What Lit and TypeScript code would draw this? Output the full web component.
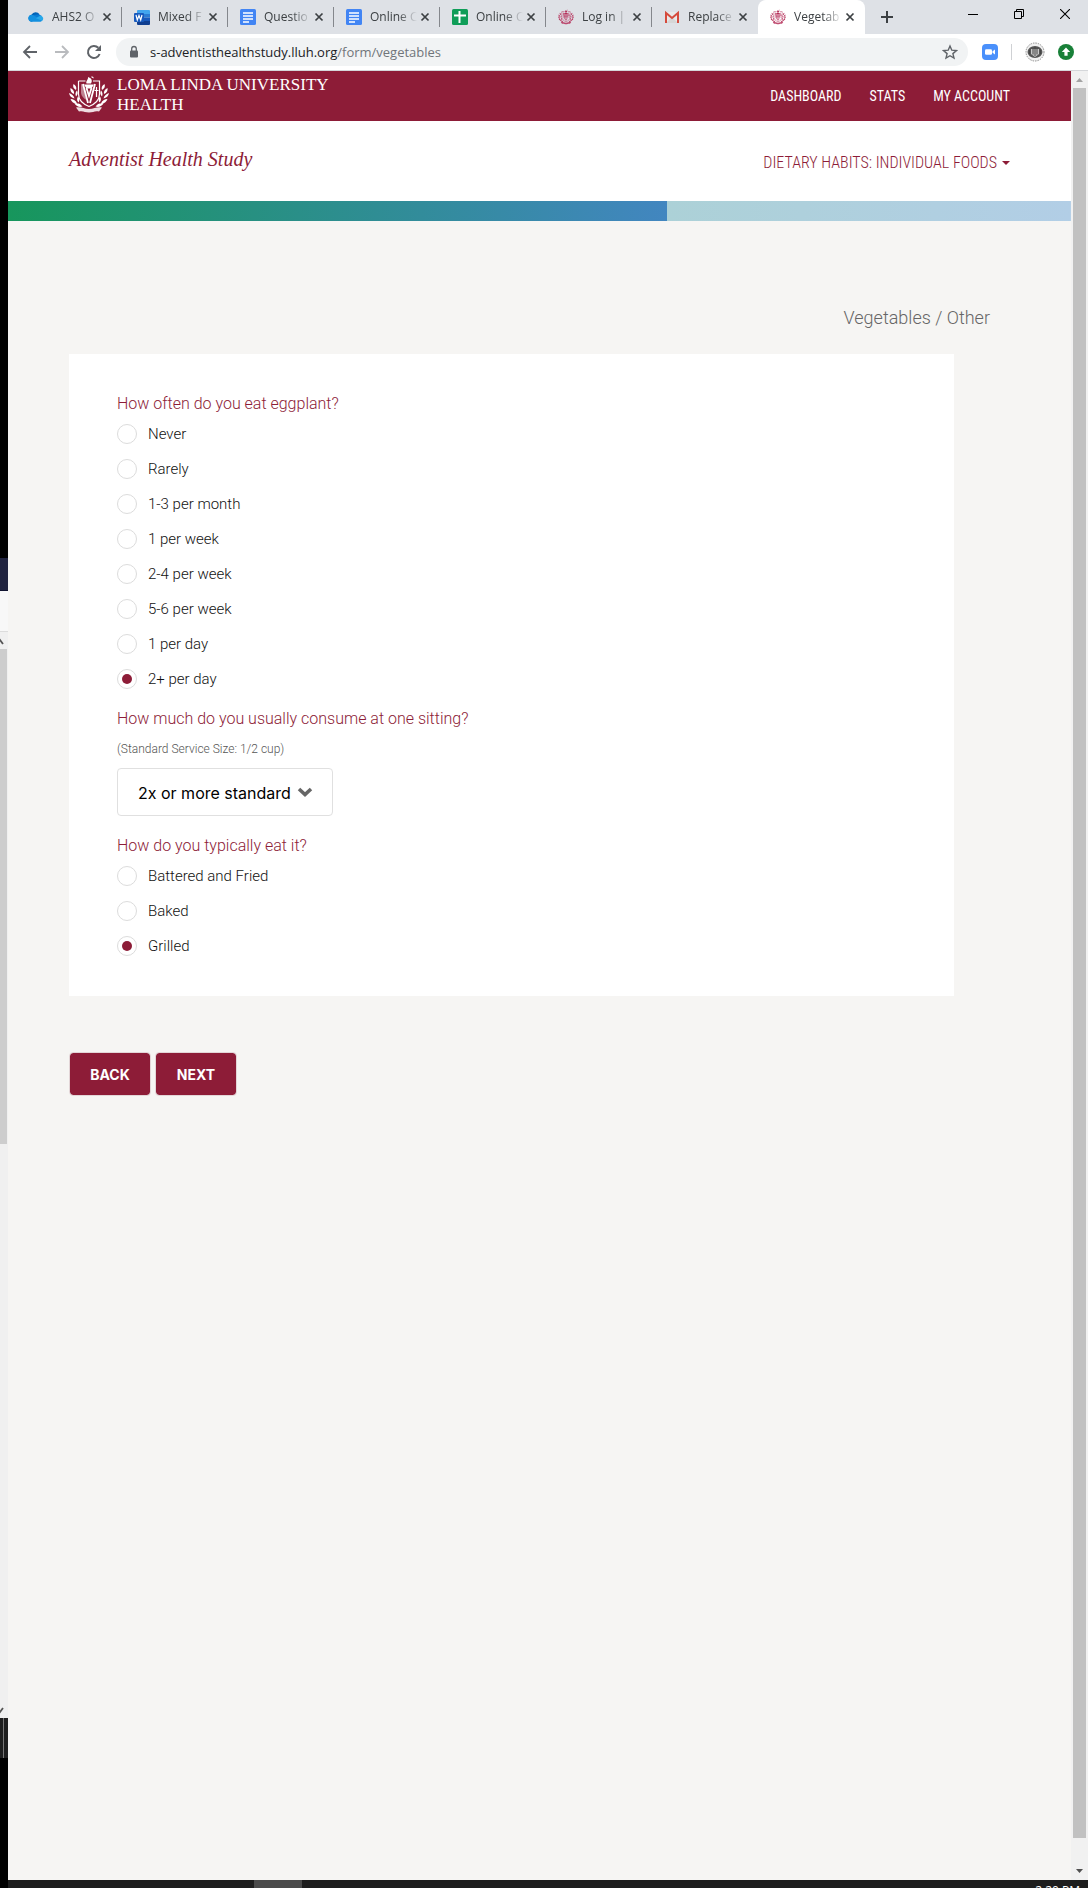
import { LitElement, html, css, svg } from "lit";
import { customElement, property, state } from "lit/decorators.js";
import { classMap } from "lit/directives/class-map.js";

type IconName =
  | "cloud" | "word" | "docs" | "sheets" | "seal" | "gmail"
  | "back" | "forward" | "reload" | "lock" | "star" | "zoom" | "avatar" | "update"
  | "close" | "plus" | "minimize" | "restore" | "exit";

const sealShape = svg`
  <path d="M9.500 5h7M24 5h6.500v13c0 6-4.500 10-10.500 12.500C14 28 9.500 24 9.500 18V5" fill="none" stroke="currentColor" stroke-width="1.200"/>
  <path d="M12 8c1.500 0 2.500 1 3 3l2.500 13c-3-1.500-5-4-5.500-7z" fill="currentColor" opacity=".45"/>
  <path d="M14 8l5 19M26 8l-5 19M17.500 12l2.500 8 2.500-8" fill="none" stroke="currentColor" stroke-width="1.800"/>
  <path d="M27.500 11v10M25.500 14.500h4" stroke="currentColor" stroke-width="1.200"/>
  <path d="M15 8.500h10l-2.500 4h-5z" fill="currentColor"/>
  <path d="M17.500 7.500c-1-3 2-3.500 1.500-6.500 3 1 5 3 3 6.500zM22 1c1.500-1 3 0 2.500 1.500" fill="currentColor"/>
  <g fill="currentColor">
    <path d="M4.500 8c2.500 1.500 3.500 3.500 2.500 6-2.500-1.500-3.500-3.500-2.500-6zM1.500 12c3 1.500 4 3.500 3.500 6-3-1-4-3.500-3.500-6zM0 17c3 1 5 3 5.500 5.500C2.500 22 .5 20 0 17zM1.500 23c3 0 5.500 1.500 6.500 4.500-3 .5-5.500-1.500-6.500-4.500zM5.500 27.500c3-1 6 0 8 3-3 1-6 0-8-3zM8 14.500c1 2 1 4-1 6-1-2.500-.5-4.500 1-6zM9 20.500c1.800 2 1.800 4 .5 6-1.800-2-1.800-4-.5-6z"/>
    <path d="M35.500 8c-2.500 1.500-3.500 3.500-2.500 6 2.500-1.500 3.500-3.500 2.500-6zM38.500 12c-3 1.500-4 3.500-3.500 6 3-1 4-3.500 3.500-6zM40 17c-3 1-5 3-5.500 5.500 3-.5 5-2.500 5.500-5.500zM38.500 23c-3 0-5.500 1.500-6.500 4.500 3 .5 5.500-1.500 6.500-4.500zM34.500 27.500c-3-1-6 0-8 3 3 1 6 0 8-3zM32 14.500c-1 2-1 4 1 6 1-2.500.5-4.500-1-6zM31 20.500c-1.800 2-1.800 4-.5 6 1.800-2 1.800-4 .5-6z"/>
  </g>
  <path d="M7 31.500c5-1 8 1.500 13 1.500s8-2.500 13-1.500l-3 4c-4-1-6 1-10 1s-6-2-10-1z" fill="currentColor" opacity=".85"/>`;

const drawings: Record<IconName, [string, unknown]> = {
  cloud: ["0 0 16 16", svg`<path d="M4 12.800a3.600 3.600 0 0 1-.5-7.100 4.600 4.600 0 0 1 8-.4L9 8z" fill="#0364b8"/><path d="M9.500 5.600a3.800 3.800 0 0 1 3.400.8 3 3 0 0 1 1 .5L8 11 3 6.200z" fill="#0a7bd4"/><path d="M3.500 12.800a3.500 3.500 0 1 1 1.800-6.600l9 5.400a3 3 0 0 1-1.800 1.200z" fill="#1490df"/><path d="M7.800 9.300l4.700-2.800a3.200 3.200 0 0 1 1.900 5.200z" fill="#28a8ea"/>`],
  word: ["0 0 16 16", svg`<path d="M4 1h11a1 1 0 0 1 1 1v3H3V2a1 1 0 0 1 1-1z" fill="#41a5ee"/><path d="M3 5h13v3.500H3z" fill="#2b7cd3"/><path d="M3 8.500h13V12H3z" fill="#185abd"/><path d="M3 12h13v3a1 1 0 0 1-1 1H4a1 1 0 0 1-1-1z" fill="#103f91"/><rect y="4" width="10" height="9" rx="1" fill="#185abd"/><path d="M2 6l1.300 5L5 6.500 6.700 11 8 6" fill="none" stroke="#fff" stroke-width="1.200"/>`],
  docs: ["0 0 16 16", svg`<rect width="16" height="16" rx="1.500" fill="#4285f4"/><path d="M3 4h10M3 7h10M3 10h10M3 13h6" stroke="#fff" stroke-width="1.600"/>`],
  sheets: ["0 0 16 16", svg`<rect width="16" height="16" rx="1.500" fill="#0f9d58"/><path d="M2 6.500h12M7.500 2v12" stroke="#fff" stroke-width="2"/>`],
  seal: ["0 0 40 37", sealShape],
  gmail: ["0 0 16 16", svg`<path d="M2 3h12v11H2z" fill="#e9e9e9"/><path d="M2 14l6-6 6 6z" fill="#d6d6d6"/><path d="M2 14V4l6 5 6-5v10" fill="none" stroke="#d54b3d" stroke-width="2"/>`],
  back: ["0 0 16 16", svg`<path d="M15 8H2M8 2L2 8l6 6" fill="none" stroke="#5f6368" stroke-width="1.800"/>`],
  forward: ["0 0 16 16", svg`<path d="M1 8h13M8 2l6 6-6 6" fill="none" stroke="#b9bbbe" stroke-width="1.800"/>`],
  reload: ["0 0 16 16", svg`<path d="M13.600 10A6 6 0 1 1 12.300 3.800" fill="none" stroke="#5f6368" stroke-width="2"/><path d="M15 1v6H9z" fill="#5f6368"/>`],
  lock: ["0 0 16 16", svg`<rect x="4" y="6.500" width="8" height="7" rx="1" fill="#5f6368"/><path d="M5.700 7V4.800a2.300 2.300 0 0 1 4.600 0V7" fill="none" stroke="#5f6368" stroke-width="1.300"/>`],
  star: ["0 0 16 16", svg`<path d="M8 2l1.800 4.200 4.600.4-3.500 3 1.100 4.500L8 11.700l-4 2.400 1.100-4.500-3.500-3 4.600-.4z" fill="none" stroke="#5f6368" stroke-width="1.400"/>`],
  zoom: ["0 0 16 16", svg`<rect width="16" height="16" rx="4" fill="#4a90fb"/><rect x="3" y="5.200" width="7" height="5.600" rx="1.300" fill="#fff"/><path d="M10.500 7.300L13 5.500v5l-2.500-1.800z" fill="#fff"/>`],
  avatar: ["0 0 20 20", svg`<circle cx="10" cy="10" r="9" fill="#f1f1f1" stroke="#8b8b8b" stroke-width="1" stroke-dasharray="1.500 1"/><ellipse cx="10" cy="10" rx="7.500" ry="6" fill="#555"/><path d="M6 7h8v5l-4 3-4-3z" fill="#c9c9c9"/><path d="M8 6.500v6M10 5v9M12 6.500v6M4.500 8v4M15.500 8v4" stroke="#444" stroke-width="1"/>`],
  update: ["0 0 16 16", svg`<circle cx="8" cy="8" r="8" fill="#188038"/><path d="M8 3.500L12.200 8H9.600v3.800H6.400V8H3.800z" fill="#fff"/>`],
  close: ["0 0 10 10", svg`<path d="M1.500 1.500l7 7M8.500 1.500l-7 7" stroke="#3c4043" stroke-width="1.700"/>`],
  plus: ["0 0 12 12", svg`<path d="M6 0v12M0 6h12" stroke="#3c4043" stroke-width="2"/>`],
  minimize: ["0 0 10 10", svg`<path d="M0 5.500h10" stroke="#000"/>`],
  restore: ["0 0 10 10", svg`<path d="M.5 2.500h7v7h-7zM2.500 2.500v-2h7v7h-2" fill="none" stroke="#000"/>`],
  exit: ["0 0 10 10", svg`<path d="M0 0l10 10M10 0L0 10" stroke="#000" stroke-width="1.100"/>`],
};

const icon = (name: IconName) => html`<svg class="icon ${name}" viewBox=${drawings[name][0]} aria-hidden="true">${drawings[name][1]}</svg>`;

const resets = css`
  *, *::before, *::after { box-sizing: border-box; }
  button { border: 0; padding: 0; margin: 0; background: none; font: inherit; color: inherit; cursor: pointer; }
  a { color: inherit; text-decoration: none; }
  .icon { display: block; width: 16px; height: 16px; flex: none; }
`;

interface Tab { icon: IconName; title: string; }

const tabs: Tab[] = [
  { icon: "cloud", title: "AHS2 O" },
  { icon: "word", title: "Mixed F" },
  { icon: "docs", title: "Questio" },
  { icon: "docs", title: "Online C" },
  { icon: "sheets", title: "Online C" },
  { icon: "seal", title: "Log in |" },
  { icon: "gmail", title: "Replace" },
  { icon: "seal", title: "Vegetab" },
];

@customElement("browser-chrome")
class BrowserChrome extends LitElement {
  @state() private active = 7;

  static styles = [resets, css`
    :host { display: block; font-family: "Open Sans", "Noto Sans", sans-serif; color: #3c4043; }
    .strip { display: flex; height: 34px; padding-left: 8px; background: #dee1e6; }
    .tab { display: flex; align-items: center; width: 106px; padding: 0 10px 0 12px; }
    .tab.divided { background: linear-gradient(#84878c, #84878c) right 7px / 1px 20px no-repeat; }
    .tab.active { width: 107px; border-radius: 8px 8px 0 0; background: #fff; }
    .title { flex: 1; min-width: 0; margin-left: 8px; overflow: hidden; white-space: nowrap; text-align: left; font-size: 12px; line-height: 16px;
      mask-image: linear-gradient(to right, #000 60%, transparent 100%); }
    .seal { color: #b5305a; }
    .close { width: 10px; height: 10px; }
    .shut { margin-left: 3px; }
    .add { display: grid; place-items: center; width: 28px; height: 34px; margin-left: 8px; }
    .plus { width: 12px; height: 12px; }
    .controls { display: flex; height: 28px; margin-left: auto; }
    .controls button { display: grid; place-items: center; width: 46px; }
    .controls .icon { width: 10px; height: 10px; }
    .bar { display: flex; align-items: center; height: 37px; background: #fff; border-bottom: 1px solid #d5d7da; padding: 0 14px; }
    .nav { display: flex; gap: 16px; }
    .address { flex: 1; display: flex; align-items: center; height: 28px; margin: 0 14px; padding: 0 10px; border-radius: 14px; background: #f1f3f4; }
    .url { flex: 1; padding: 0 8px; font-size: 13px; line-height: 20px; color: #70757a; white-space: nowrap; }
    .host { color: #202124; }
    .tools { display: flex; align-items: center; gap: 13px; }
    .rule { width: 1px; height: 16px; background: #cfd1d4; }
    .avatar { width: 20px; height: 20px; }
  `];

  render() {
    return html`
      <div class="strip">
        ${tabs.map((tab, i) => html`
          <div class=${classMap({ tab: true, active: i === this.active, divided: i !== this.active && i !== this.active - 1 })}
            @click=${() => (this.active = i)}>
            ${icon(tab.icon)}
            <button class="title">${tab.title}</button>
            <button class="shut" aria-label="Close tab">${icon("close")}</button>
          </div>`)}
        <button class="add" aria-label="New tab">${icon("plus")}</button>
        <div class="controls">
          <button aria-label="Minimize">${icon("minimize")}</button>
          <button aria-label="Restore">${icon("restore")}</button>
          <button aria-label="Close">${icon("exit")}</button>
        </div>
      </div>
      <div class="bar">
        <div class="nav">
          <button aria-label="Back">${icon("back")}</button>
          <button aria-label="Forward">${icon("forward")}</button>
          <button aria-label="Reload">${icon("reload")}</button>
        </div>
        <div class="address">
          ${icon("lock")}
          <div class="url"><span class="host">s-adventisthealthstudy.lluh.org</span>/form/vegetables</div>
          <button aria-label="Bookmark this page">${icon("star")}</button>
        </div>
        <div class="tools">
          <button aria-label="Zoom meetings">${icon("zoom")}</button>
          <span class="rule"></span>
          <button aria-label="Profile">${icon("avatar")}</button>
          <button aria-label="Update">${icon("update")}</button>
        </div>
      </div>`;
  }
}

@customElement("site-header")
class SiteHeader extends LitElement {
  @property({ type: Number }) progress = 0;

  static styles = [resets, css`
    :host { display: block; font-family: "Roboto Condensed", "Liberation Sans Narrow", "Liberation Sans", sans-serif; }
    .top { display: flex; justify-content: space-between; align-items: center; height: 50px; padding: 0 61px; background: #8d1c37; color: #fff; }
    .brand { display: flex; align-items: center; gap: 8px; padding-bottom: 3px; font-family: "Liberation Serif", serif; font-size: 17px; line-height: 20px; }
    .brand .seal { width: 40px; height: 37px; }
    .links { display: flex; gap: 28px; font-size: 14px; line-height: 20px; }
    .sub { display: flex; justify-content: space-between; align-items: center; height: 80px; padding: 0 61px; background: #fff; color: #8d1c37; }
    .study { padding-bottom: 4px; font-family: "Liberation Serif", serif; font-style: italic; font-size: 20px; line-height: 24px; }
    .section { display: flex; align-items: center; gap: 5px; padding-top: 4px; font-size: 16px; font-weight: 300; line-height: 20px; }
    .caret { width: 8px; height: 4px; background: #8d1c37; clip-path: polygon(0 0, 100% 0, 50% 100%); }
    .track { height: 20px; background: linear-gradient(to right, #acd1d7, #b2cee6) right / 38% 100% no-repeat; }
    .fill { height: 100%; background: linear-gradient(to right, #17965c, #4286c0); }
  `];

  render() {
    return html`
      <div class="top">
        <a class="brand" href="#home">${icon("seal")}<span>LOMA LINDA UNIVERSITY<br>HEALTH</span></a>
        <nav class="links">
          <a href="#dashboard">DASHBOARD</a><a href="#stats">STATS</a><a href="#account">MY ACCOUNT</a>
        </nav>
      </div>
      <div class="sub">
        <a class="study" href="#study">Adventist Health Study</a>
        <button class="section">DIETARY HABITS: INDIVIDUAL FOODS<span class="caret"></span></button>
      </div>
      <div class="track"><div class="fill" style="width:${this.progress}%"></div></div>`;
  }
}

@customElement("radio-question")
class RadioQuestion extends LitElement {
  @property() name = "";
  @property() question = "";
  @property() value = "";
  @property({ attribute: false }) options: string[] = [];

  static styles = [resets, css`
    :host { display: block; }
    fieldset { border: 0; margin: 0; padding: 0; min-width: 0; }
    legend { padding: 0; color: #8d1c37; font-size: 16px; line-height: 24px; }
    label { display: flex; align-items: center; gap: 11px; height: 35px; color: #111; font-size: 15px; line-height: 20px; }
    input { appearance: none; display: grid; place-items: center; width: 20px; height: 20px; margin: 0; border: 1px solid #dcdcdc; border-radius: 50%; background: #fff; }
    input:checked::before { content: ""; width: 10px; height: 10px; border-radius: 50%; background: #8d1c37; }
  `];

  render() {
    return html`
      <fieldset>
        <legend>${this.question}</legend>
        ${this.options.map((option, i) => html`
          <label for="${this.name}-${i}">
            <input type="radio" id="${this.name}-${i}" name=${this.name} .checked=${option === this.value}
              @change=${() => (this.value = option)}>${option}
          </label>`)}
      </fieldset>`;
  }
}

@customElement("food-form")
class FoodForm extends LitElement {
  static styles = [resets, css`
    :host { display: block; padding: 85px 61px; font-family: Roboto, "Liberation Sans", sans-serif; font-weight: 300; }
    .crumbs { margin: 0; padding-right: 20px; text-align: right; color: #666; font-size: 18px; font-weight: 300; line-height: 24px; }
    .card { width: 94%; margin-top: 24px; padding: 38px 48px 33px; background: #fff; }
    .serving { padding: 11px 0 18px; }
    .question { display: block; color: #8d1c37; font-size: 16px; line-height: 24px; }
    .note { margin: 10px 0 10px; color: #555; font-size: 12px; line-height: 17px; }
    .picker { display: grid; width: 216px; height: 48px; align-items: center; }
    .picker > * { grid-area: 1 / 1; }
    select { appearance: none; width: 100%; height: 48px; padding: 2px 20px 0; border: 1px solid #e0e0e0; border-radius: 4px; background: #fff; color: #000; font: 400 16px/24px Inter, "Liberation Sans", sans-serif; }
    .chevron { justify-self: end; width: 16px; height: 10px; margin-right: 20px; pointer-events: none; }
    .actions { display: flex; gap: 4px; margin-top: 56px; }
    .actions button { width: 82px; height: 44px; padding-top: 2px; border: 1px solid #e3d5d7; border-radius: 4px; background: #8d1c37 padding-box; color: #fff; font: 700 14px/20px Inter, "Liberation Sans", sans-serif; }
  `];

  render() {
    return html`
      <h1 class="crumbs">Vegetables / Other</h1>
      <div class="card">
        <radio-question name="often" question="How often do you eat eggplant?" value="2+ per day"
          .options=${["Never", "Rarely", "1-3 per month", "1 per week", "2-4 per week", "5-6 per week", "1 per day", "2+ per day"]}></radio-question>
        <div class="serving">
          <label class="question" for="amount">How much do you usually consume at one sitting?</label>
          <p class="note">(Standard Service Size: 1/2 cup)</p>
          <div class="picker">
            <select id="amount"><option>2x or more standard</option></select>
            <svg class="chevron" viewBox="0 0 16 10" aria-hidden="true"><path d="M2 2l6 5.500L14 2" fill="none" stroke="#666" stroke-width="3.600"/></svg>
          </div>
        </div>
        <radio-question name="style" question="How do you typically eat it?" value="Grilled"
          .options=${["Battered and Fried", "Baked", "Grilled"]}></radio-question>
      </div>
      <div class="actions"><button>BACK</button><button>NEXT</button></div>`;
  }
}

@customElement("app-root")
class AppRoot extends LitElement {
  static styles = [resets, css`
    :host { display: grid; grid-template-columns: 8px minmax(0, 1fr); min-height: 100vh; }
    .edge { display: flex; flex-direction: column; overflow: hidden; background: #000; }
    .edge-black { height: 558px; }
    .edge-navy { height: 33px; background: #20233f; border-bottom: 1px solid #111430; }
    .edge-pane { height: 41px; background: #f8f8f8; border-bottom: 1px solid #dcdcdc; }
    .edge-scroll { display: flex; flex-direction: column; flex: 1; background: #f0f0f0; }
    .edge-thumb { width: 7px; height: 495px; background: #cdcdcd; }
    .edge-arrow { display: block; width: 8px; height: 17px; }
    .edge-arrow.down { margin-top: auto; }
    .edge-bar { height: 40px; margin-bottom: 130px; background: linear-gradient(#777, #777) 3px 0 / 1px 100% no-repeat #1e1e1e; }
    .window { display: flex; flex-direction: column; min-width: 0; }
    .view { display: flex; flex: 1; }
    .page { flex: 1; min-width: 0; background: #f6f5f3; }
    .scroll { display: flex; flex-direction: column; align-items: center; width: 17px; background: #f1f1f1; }
    .scroll .arrow { width: 17px; height: 17px; flex: none; }
    .thumb { flex: 1; width: 13px; margin-bottom: 25px; background: #c1c1c1; }
    .taskbar { display: flex; justify-content: space-between; height: 8px; padding: 0 8px 0 246px; overflow: hidden; background: #1d1d1d; color: #fff; }
    .task { width: 48px; background: #4a4a4a; }
    .clock { margin-top: 3px; font: 12px/16px "Open Sans", "Noto Sans", sans-serif; }
  `];

  render() {
    return html`
      <div class="edge">
        <div class="edge-black"></div><div class="edge-navy"></div><div class="edge-pane"></div>
        <div class="edge-scroll">
          <svg class="edge-arrow" viewBox="0 0 8 17"><path d="M-3 12l3-4 3 4" fill="none" stroke="#555" stroke-width="1.800"/></svg>
          <div class="edge-thumb"></div>
          <svg class="edge-arrow down" viewBox="0 0 8 17"><path d="M-3 7l3 4 3-4" fill="none" stroke="#555" stroke-width="1.800"/></svg>
        </div>
        <div class="edge-bar"></div>
      </div>
      <div class="window">
        <browser-chrome></browser-chrome>
        <div class="view">
          <main class="page">
            <site-header .progress=${62}></site-header>
            <food-form></food-form>
          </main>
          <div class="scroll" aria-hidden="true">
            <svg class="arrow" viewBox="0 0 17 17"><path d="M5 11l3.500-4 3.500 4z" fill="#a3a3a3"/></svg>
            <div class="thumb"></div>
            <svg class="arrow" viewBox="0 0 17 17"><path d="M5 6l3.500 4L12 6z" fill="#505050"/></svg>
          </div>
        </div>
        <div class="taskbar"><span class="task"></span><span class="clock">2:20 PM</span></div>
      </div>`;
  }
}
